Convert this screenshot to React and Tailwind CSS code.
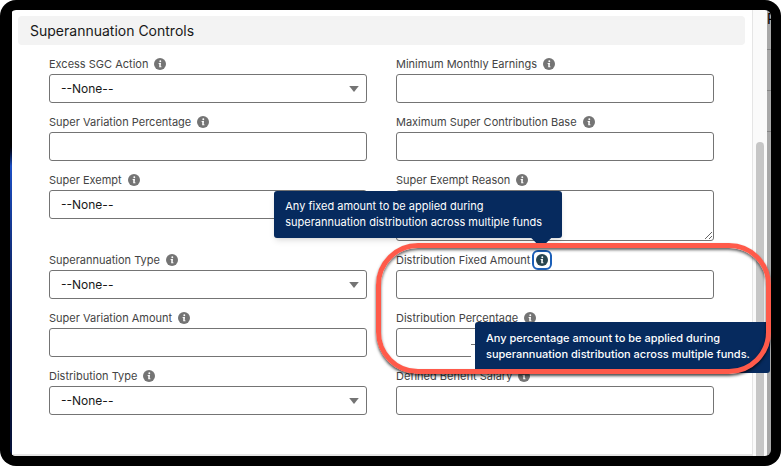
import { useId } from "react";

function InfoIcon() {
  return (
    <svg viewBox="0 0 12 12" className="block size-3" aria-hidden="true">
      <circle cx="6" cy="6" r="6" fill="currentColor" />
      <circle cx="6.3" cy="3.3" r="0.95" fill="#fff" />
      <path d="M4.6 5H7L6.7 8.2L7.5 8.6V9.2H5.2L5.3 6.2L4.6 5.8Z" fill="#fff" />
    </svg>
  );
}

function Tooltip({ className, children }) {
  return (
    <div role="tooltip" className={`absolute z-20 bg-[#062a5e] px-[11px] text-[11px] leading-4 whitespace-nowrap text-white ${className}`}>
      {children}
    </div>
  );
}

function Label({ id, text, active, tip }) {
  return (
    <div className="flex h-5 items-center gap-1.5">
      <label htmlFor={id} className="text-[11px] leading-4 whitespace-nowrap text-[#444]">{text}</label>
      <span className="relative flex">
        <button
          type="button"
          aria-label={`Help: ${text}`}
          className={active ? "rounded-xs text-[#28454f] outline-2 outline-offset-2 outline-[#1b5fb8]" : "text-[#747474]"}
        >
          <InfoIcon />
        </button>
        {tip}
      </span>
    </div>
  );
}

const box = "block w-full rounded-[3px] border border-[#747474] bg-white text-[#181818] outline-none";

function Field({ text, type = "input", active, tip, children }) {
  const id = useId();
  return (
    <div className="relative">
      <Label id={id} text={text} active={active} tip={tip} />
      {type === "input" && <input id={id} type="text" className={`${box} h-[29px] px-3 text-xs`} />}
      {type === "area" && <textarea id={id} className={`${box} h-[51px] px-3 text-xs`} />}
      {type === "select" && (
        <div className="relative">
          <select id={id} className={`${box} h-[29px] appearance-none px-[11px] text-xs`}>
            <option>--None--</option>
          </select>
          <svg viewBox="0 0 10 6" className="pointer-events-none absolute top-3 right-2 h-1.5 w-2.5" aria-hidden="true">
            <path d="M0.2 0H9.8L5 6Z" fill="#747474" />
          </svg>
        </div>
      )}
      {children}
    </div>
  );
}

export default function App() {
  return (
    <div className="bg-white font-['Inter',sans-serif]">
      <div className="relative flex min-h-screen overflow-hidden rounded-2xl bg-black p-2.5">
        <div className="flex grow overflow-hidden rounded-md">
          <div className="w-0.5 bg-linear-to-b from-black from-30% via-[#1d4fc4] via-35% to-[#07123a] to-75%" />
          <main className="flex grow flex-col border-b-2 border-[#e5e5e5] bg-white pb-9">
            <h2 className="mt-1.5 mr-[7px] ml-1.5 flex h-[29px] items-center rounded-sm bg-[#f3f3f3] px-3 text-[14px] text-[#181818]">
              Superannuation Controls
            </h2>
            <form className="mt-[9px] mr-[38px] ml-[37px] grid grid-cols-2 gap-x-[29px] gap-y-[9px]">
              <Field text="Excess SGC Action" type="select" />
              <Field text="Minimum Monthly Earnings" />
              <Field text="Super Variation Percentage" />
              <Field text="Maximum Super Contribution Base" />
              <Field text="Super Exempt" type="select" />
              <Field text="Super Exempt Reason" type="area" />
              <Field text="Superannuation Type" type="select" />
              <Field
                text="Distribution Fixed Amount"
                active
                tip={
                  <Tooltip className="-right-[14px] bottom-[28px] w-72 rounded-[3px] pt-[7px] pb-2 shadow-md">
                    Any fixed amount to be applied during
                    <br />
                    superannuation distribution across multiple funds
                    <span className="absolute top-full right-[11px] h-1.5 w-5 bg-[#062a5e] [clip-path:polygon(0_0,100%_0,70%_100%,30%_100%)]" />
                  </Tooltip>
                }
              />
              <Field text="Super Variation Amount" />
              <Field text="Distribution Percentage">
                <div className="absolute top-[24px] -right-[56px] z-10 h-[28px] w-[299px] bg-white">
                  <span className="absolute top-[12px] left-0 h-px w-1 bg-[#747474]" />
                </div>
                <Tooltip className="top-[14px] -right-[56px] h-[51px] w-[295px] rounded-[3px] pt-2 font-medium">
                  Any percentage amount to be applied during
                  <br />
                  superannuation distribution across multiple funds.
                </Tooltip>
              </Field>
              <Field text="Distribution Type" type="select" />
              <Field text="Defined Benefit Salary" />
            </form>
          </main>
          <div className="flex w-[15px] border-l border-[#e5e5e5] bg-[#fafafa] px-[3px] pt-[132px]">
            <div className="grow rounded-t bg-[#c6c6c6]" />
          </div>
          <aside className="w-1 overflow-hidden bg-[#a8a8a8] text-sm leading-[18px] text-black">
            <div className="h-10 border-b border-[#858585]">P</div>
            <div className="h-[41px] border-b border-[#858585]" />
            <div className="h-[41px] border-b border-[#858585]" />
          </aside>
        </div>
        <div className="pointer-events-none absolute top-[243px] right-[10px] z-30 h-[131px] w-[395px] rounded-[42px] border-[5px] border-[#ff5a4a] shadow-[0_2px_3px_rgba(0,0,0,0.7),inset_0_2px_3px_rgba(0,0,0,0.6)]" />
      </div>
    </div>
  );
}
